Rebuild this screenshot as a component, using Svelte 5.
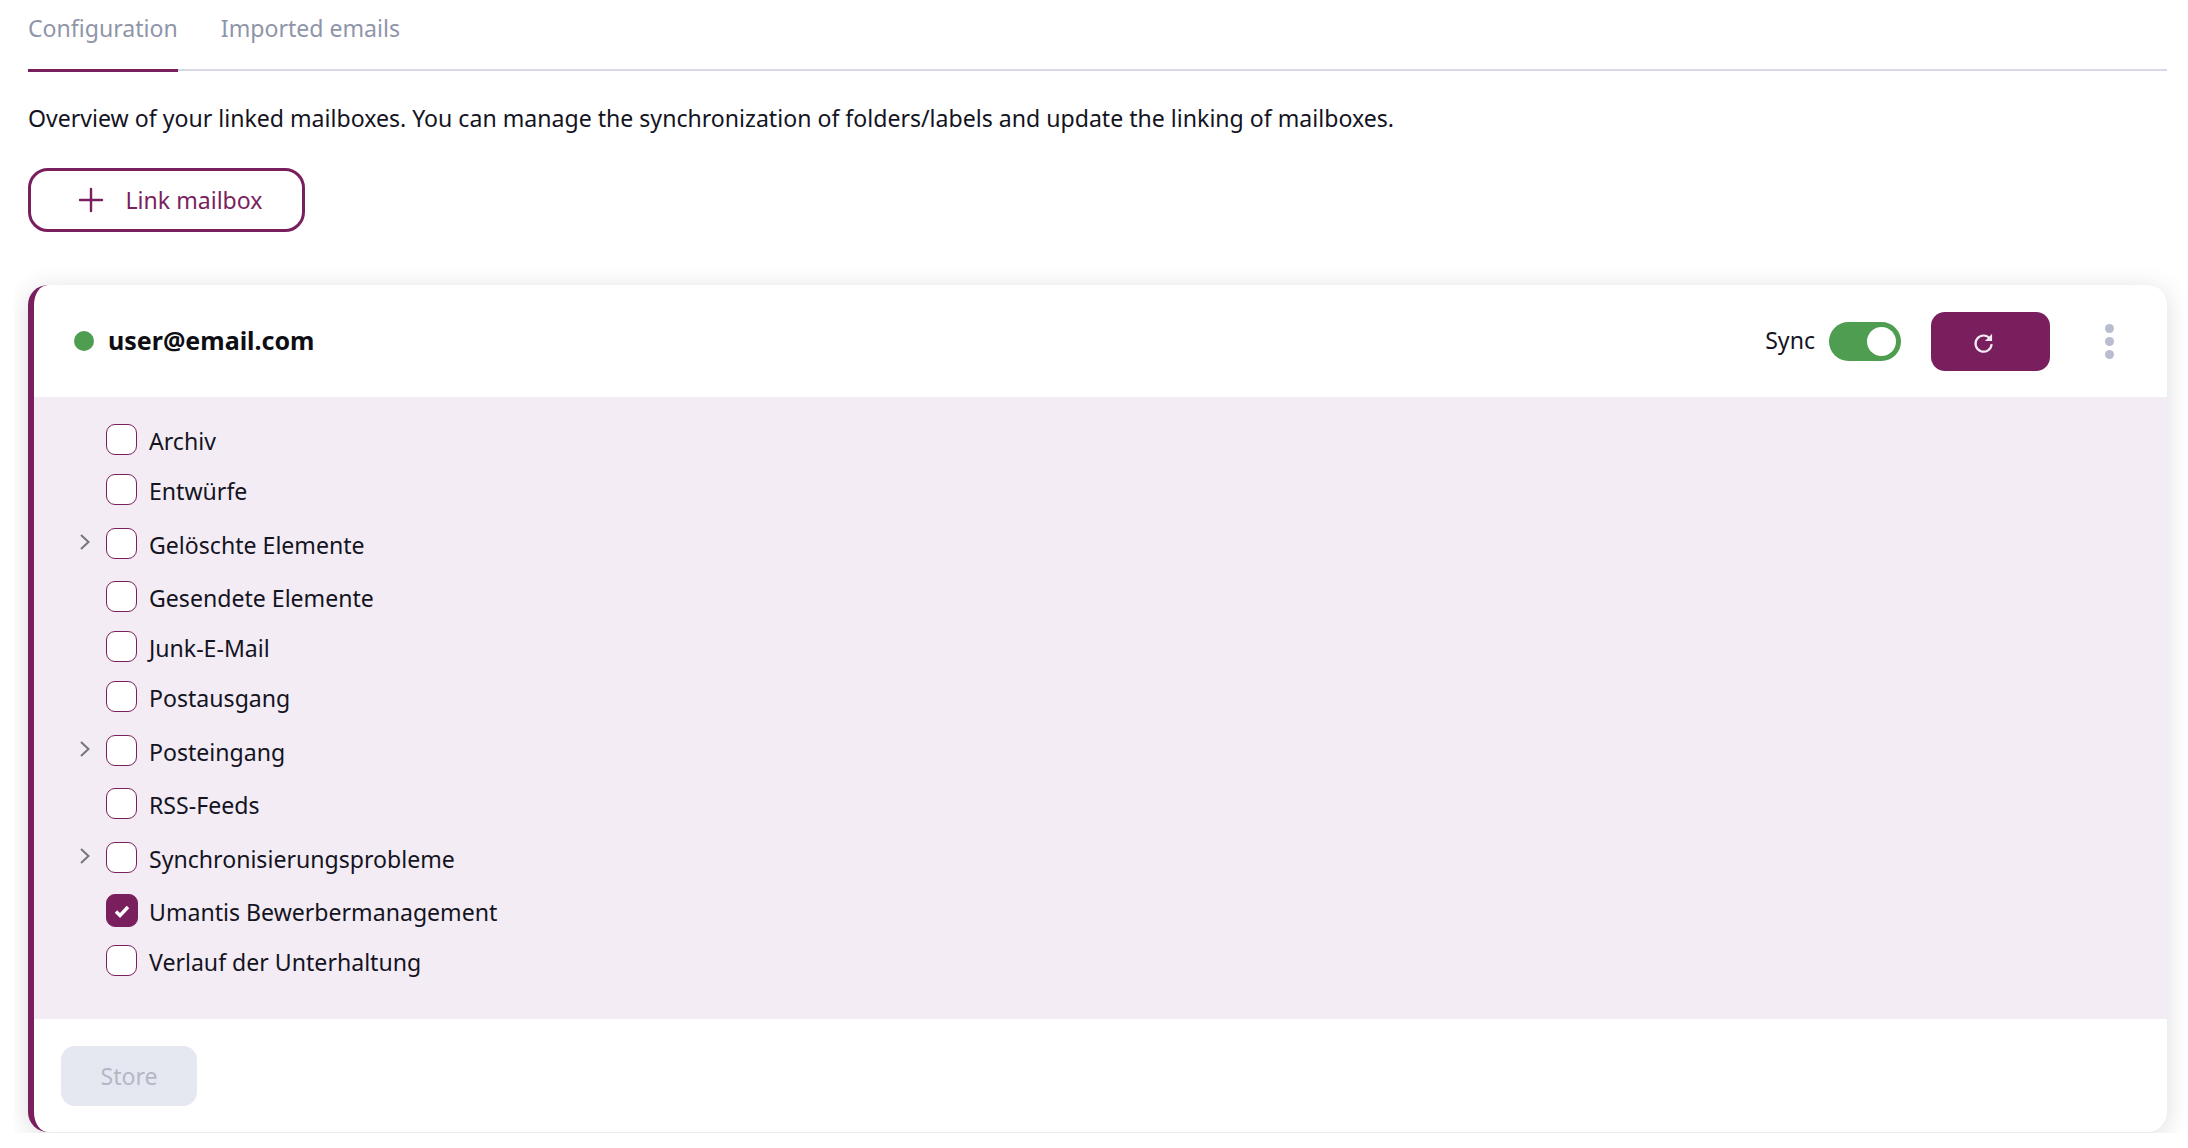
<script>
  const folders = [
    { name: 'Archiv' },
    { name: 'Entwürfe' },
    { name: 'Gelöschte Elemente', expandable: true },
    { name: 'Gesendete Elemente' },
    { name: 'Junk-E-Mail' },
    { name: 'Postausgang' },
    { name: 'Posteingang', expandable: true },
    { name: 'RSS-Feeds' },
    { name: 'Synchronisierungsprobleme', expandable: true },
    { name: 'Umantis Bewerbermanagement', checked: true },
    { name: 'Verlauf der Unterhaltung' }
  ]
</script>

<div class="page">
  <nav class="tabs">
    <span class="tab active">Configuration</span>
    <span class="tab">Imported emails</span>
  </nav>

  <p class="intro">
    Overview of your linked mailboxes. You can manage the synchronization of folders/labels and update the linking of mailboxes.
  </p>

  <button class="link-btn">
    <svg width="26" height="26" viewBox="0 0 26 26" fill="none" stroke="currentColor" stroke-width="2.4" stroke-linecap="round">
      <path d="M13 2v22M2 13h22" />
    </svg>
    Link mailbox
  </button>

  <div class="card-clip">
    <section class="card">
      <header class="card-head">
        <span class="dot"></span>
        <strong class="mail">user@email.com</strong>
        <span class="sync">Sync</span>
        <span class="toggle"><span class="knob"></span></span>
        <button class="refresh" aria-label="Refresh">
          <svg width="24" height="24" viewBox="0 0 22 22" fill="none">
            <path d="M16.6 7.2A7.4 7.4 0 1 0 18 12" stroke="#f3ebf3" stroke-width="2" />
            <path d="M18.4 2.6v6.6h-6.6z" fill="#f3ebf3" />
          </svg>
        </button>
        <span class="more"><i></i><i></i><i></i></span>
      </header>

      <ul class="folders">
        {#each folders as folder}
          <li class:tall={folder.expandable}>
            {#if folder.expandable}
              <svg class="chev" width="12" height="18" viewBox="0 0 12 18" fill="none" stroke="#77757b" stroke-width="2">
                <path d="M2 2l7.5 7L2 16" />
              </svg>
            {/if}
            <span class="box" class:checked={folder.checked}>
              {#if folder.checked}
                <svg width="16" height="14" viewBox="0 0 16 14" fill="none" stroke="#fff" stroke-width="3.4">
                  <path d="M2 7.5l4 4L14 3" />
                </svg>
              {/if}
            </span>
            <span class="label">{folder.name}</span>
          </li>
        {/each}
      </ul>

      <footer class="card-foot">
        <button class="store" disabled>Store</button>
      </footer>
    </section>
  </div>
</div>

<style>
  :global(body) {
    background: #fff;
  }
  .page {
    font-family: 'Noto Sans', sans-serif;
    font-size: 23.1px;
    color: #14141f;
    height: 1148px;
    box-sizing: border-box;
    overflow: hidden;
  }
  .tabs {
    display: flex;
    gap: 43px;
    margin: 0 21px 0 28px;
    height: 71px;
    box-sizing: border-box;
    border-bottom: 2px solid #d6d8e5;
  }
  .tab {
    height: 72px;
    box-sizing: border-box;
    padding-top: 11px;
    line-height: 34px;
    color: #8f95a8;
  }
  .tab.active {
    border-bottom: 3px solid #7a1f5e;
  }
  .intro {
    margin: 30px 0 0 28px;
    line-height: 34px;
    white-space: nowrap;
  }
  button {
    font: inherit;
  }
  .link-btn {
    display: flex;
    align-items: center;
    justify-content: center;
    gap: 21px;
    width: 277px;
    height: 64px;
    margin: 33px 0 0 28px;
    padding: 0 0 0 8px;
    background: #fff;
    border: 3px solid #7a1f5e;
    border-radius: 20px;
    color: #7a1f5e;
  }
  .card-clip {
    margin: 18px 0 0 14px;
    padding: 35px 21px 1px 14px;
    overflow: hidden;
  }
  .card {
    background: #fff;
    border-left: 6px solid #7a1f5e;
    border-radius: 20px;
    box-shadow: 0 4px 24px rgba(60, 60, 90, 0.18);
    overflow: hidden;
  }
  .card-head {
    display: flex;
    align-items: center;
    height: 112px;
    padding-left: 40px;
    padding-right: 53px;
  }
  .dot {
    width: 20px;
    height: 20px;
    border-radius: 50%;
    background: #4f9d50;
    margin-right: 14px;
  }
  .mail {
    font-size: 25px;
    line-height: 34px;
    margin-top: -3px;
    font-weight: 700;
    color: #0e0e14;
    flex: 1;
  }
  .sync {
    margin-top: -2px;
  }
  .toggle {
    display: flex;
    justify-content: flex-end;
    align-items: center;
    width: 72px;
    height: 39px;
    box-sizing: border-box;
    padding: 5px;
    border-radius: 20px;
    background: #4f9d50;
    margin-left: 14px;
  }
  .knob {
    width: 29px;
    height: 29px;
    border-radius: 50%;
    background: #fff;
  }
  .refresh {
    display: flex;
    align-items: center;
    justify-content: center;
    width: 119px;
    height: 59px;
    margin-left: 30px;
    padding: 3px 14px 0 0;
    border: 0;
    border-radius: 14px;
    background: #7a1f5e;
  }
  .more {
    display: flex;
    flex-direction: column;
    gap: 4px;
    margin-left: 55px;
  }
  .more i {
    width: 9px;
    height: 9px;
    border-radius: 50%;
    background: #b9bdcf;
  }
  .folders {
    list-style: none;
    margin: 0;
    padding: 19px 0 32px 72px;
    background: #f3ecf5;
  }
  .folders li {
    position: relative;
    display: flex;
    align-items: center;
    gap: 12px;
    height: 50px;
  }
  .folders li.tall {
    height: 57px;
  }
  .chev {
    position: absolute;
    left: -27px;
    top: 17px;
  }
  .box {
    display: flex;
    align-items: center;
    justify-content: center;
    width: 31px;
    height: 31px;
    box-sizing: border-box;
    margin-top: -3px;
    background: #fff;
    border: 1.5px solid #7a1f5e;
    border-radius: 9px;
  }
  .box.checked {
    background: #7a1f5e;
    width: 32px;
    height: 33px;
    margin-right: -1px;
  }
  .card-foot {
    padding: 27px 0 26px 27px;
  }
  .store {
    display: block;
    width: 136px;
    height: 60px;
    border: 0;
    border-radius: 14px;
    background: #e6e8f1;
    color: #b4b7c5;
  }
</style>
